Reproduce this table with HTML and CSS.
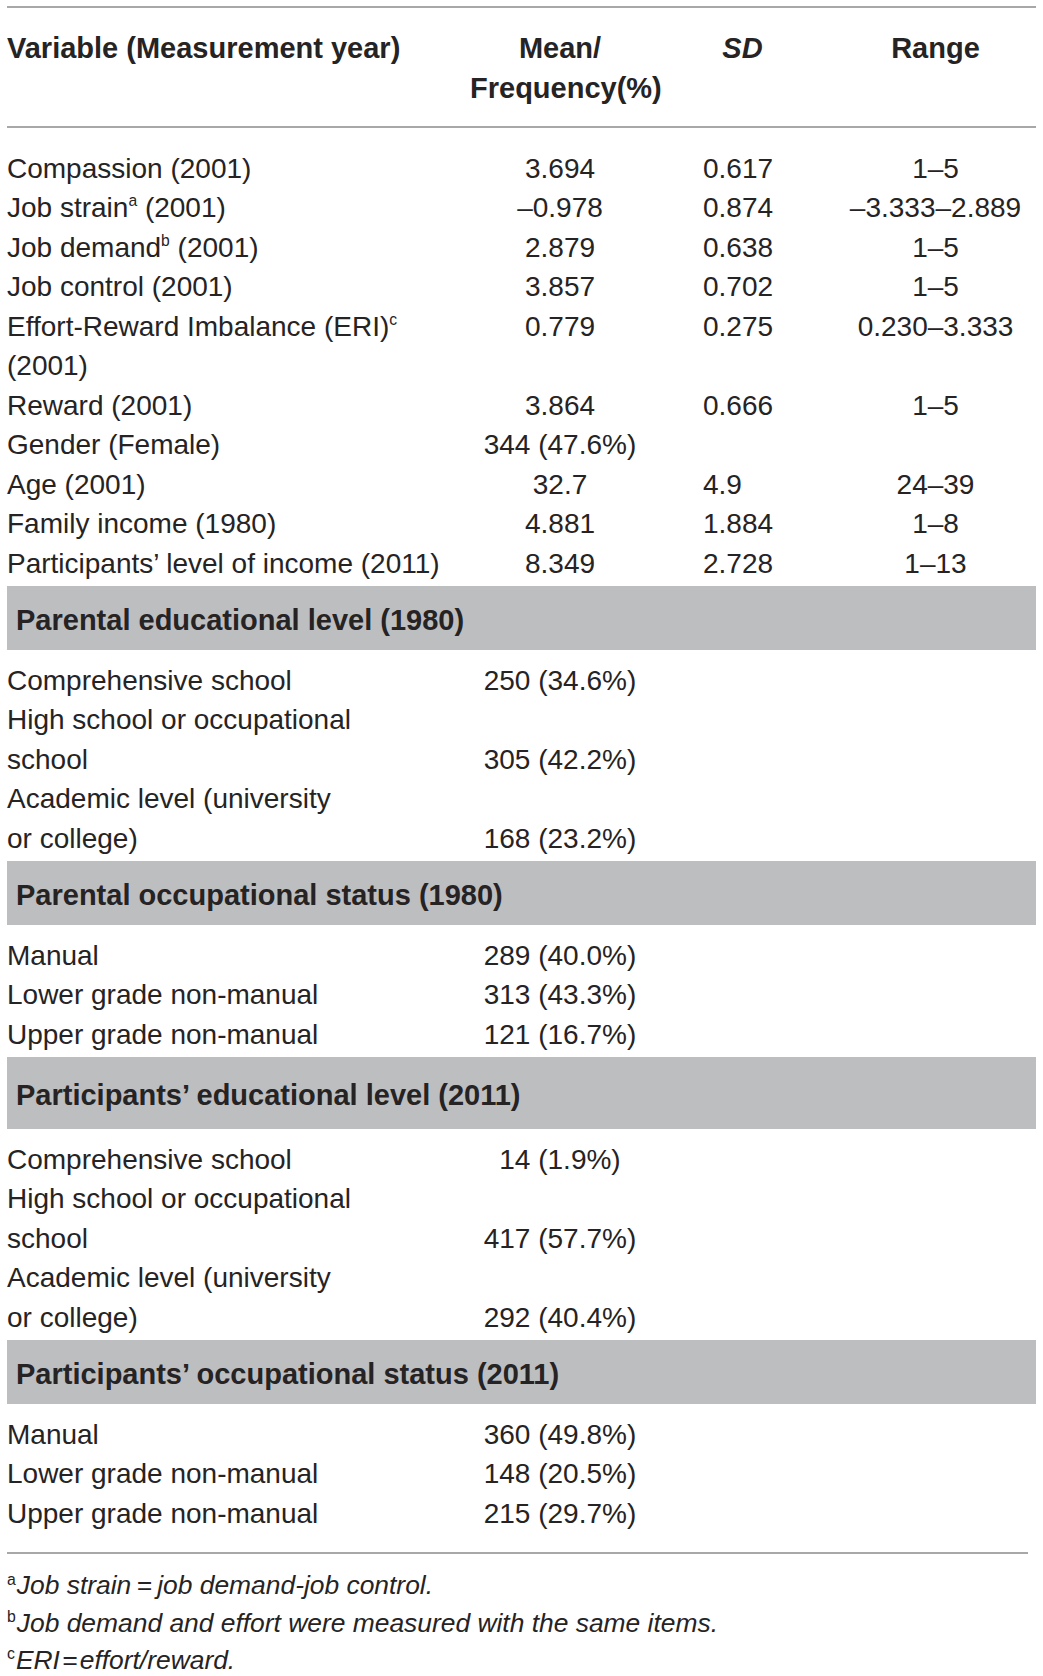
FILE: index.html
```html
<!DOCTYPE html>
<html lang="en">
<head>
<meta charset="utf-8">
<title>Descriptive statistics</title>
<link rel="stylesheet" href="styles.css">
</head>
<body>
<div class="table">
  <div class="row head">
    <div class="c-var">Variable (Measurement year)</div>
    <div class="c-mean">Mean/<br>Frequency(%)</div>
    <div class="c-sd"><i>SD</i></div>
    <div class="c-range">Range</div>
  </div>

  <div class="section first">
    <div class="row"><div class="c-var">Compassion (2001)</div><div class="c-mean">3.694</div><div class="c-sd">0.617</div><div class="c-range">1–5</div></div>
    <div class="row"><div class="c-var">Job strain<sup>a</sup> (2001)</div><div class="c-mean">–0.978</div><div class="c-sd">0.874</div><div class="c-range">–3.333–2.889</div></div>
    <div class="row"><div class="c-var">Job demand<sup>b</sup> (2001)</div><div class="c-mean">2.879</div><div class="c-sd">0.638</div><div class="c-range">1–5</div></div>
    <div class="row"><div class="c-var">Job control (2001)</div><div class="c-mean">3.857</div><div class="c-sd">0.702</div><div class="c-range">1–5</div></div>
    <div class="row top"><div class="c-var">Effort-Reward Imbalance (ERI)<sup>c</sup><br>(2001)</div><div class="c-mean">0.779</div><div class="c-sd">0.275</div><div class="c-range">0.230–3.333</div></div>
    <div class="row"><div class="c-var">Reward (2001)</div><div class="c-mean">3.864</div><div class="c-sd">0.666</div><div class="c-range">1–5</div></div>
    <div class="row"><div class="c-var">Gender (Female)</div><div class="c-mean">344 (47.6%)</div><div class="c-sd"></div><div class="c-range"></div></div>
    <div class="row"><div class="c-var">Age (2001)</div><div class="c-mean">32.7</div><div class="c-sd">4.9</div><div class="c-range">24–39</div></div>
    <div class="row"><div class="c-var">Family income (1980)</div><div class="c-mean">4.881</div><div class="c-sd">1.884</div><div class="c-range">1–8</div></div>
    <div class="row"><div class="c-var">Participants’ level of income (2011)</div><div class="c-mean">8.349</div><div class="c-sd">2.728</div><div class="c-range">1–13</div></div>
  </div>

  <div class="band">Parental educational level (1980)</div>
  <div class="section">
    <div class="row"><div class="c-var">Comprehensive school</div><div class="c-mean">250 (34.6%)</div><div class="c-sd"></div><div class="c-range"></div></div>
    <div class="row"><div class="c-var">High school or occupational<br>school</div><div class="c-mean">305 (42.2%)</div><div class="c-sd"></div><div class="c-range"></div></div>
    <div class="row"><div class="c-var">Academic level (university<br>or college)</div><div class="c-mean">168 (23.2%)</div><div class="c-sd"></div><div class="c-range"></div></div>
  </div>

  <div class="band">Parental occupational status (1980)</div>
  <div class="section">
    <div class="row"><div class="c-var">Manual</div><div class="c-mean">289 (40.0%)</div><div class="c-sd"></div><div class="c-range"></div></div>
    <div class="row"><div class="c-var">Lower grade non-manual</div><div class="c-mean">313 (43.3%)</div><div class="c-sd"></div><div class="c-range"></div></div>
    <div class="row"><div class="c-var">Upper grade non-manual</div><div class="c-mean">121 (16.7%)</div><div class="c-sd"></div><div class="c-range"></div></div>
  </div>

  <div class="band tall">Participants’ educational level (2011)</div>
  <div class="section">
    <div class="row"><div class="c-var">Comprehensive school</div><div class="c-mean">14 (1.9%)</div><div class="c-sd"></div><div class="c-range"></div></div>
    <div class="row"><div class="c-var">High school or occupational<br>school</div><div class="c-mean">417 (57.7%)</div><div class="c-sd"></div><div class="c-range"></div></div>
    <div class="row"><div class="c-var">Academic level (university<br>or college)</div><div class="c-mean">292 (40.4%)</div><div class="c-sd"></div><div class="c-range"></div></div>
  </div>

  <div class="band">Participants’ occupational status (2011)</div>
  <div class="section last">
    <div class="row"><div class="c-var">Manual</div><div class="c-mean">360 (49.8%)</div><div class="c-sd"></div><div class="c-range"></div></div>
    <div class="row"><div class="c-var">Lower grade non-manual</div><div class="c-mean">148 (20.5%)</div><div class="c-sd"></div><div class="c-range"></div></div>
    <div class="row"><div class="c-var">Upper grade non-manual</div><div class="c-mean">215 (29.7%)</div><div class="c-sd"></div><div class="c-range"></div></div>
  </div>

  <div class="notes">
    <p><sup>a</sup><i>Job strain&#8201;=&#8201;job demand-job control.</i></p>
    <p><sup>b</sup><i>Job demand and effort were measured with the same items.</i></p>
    <p><sup>c</sup><i>ERI&#8202;=&#8202;effort/reward.</i></p>
  </div>
</div>
</body>
</html>
```

FILE: styles.css
```css
body {
  margin: 0;
  background: #ffffff;
  color: #262324;
  font-family: "Liberation Sans", Arial, Helvetica, sans-serif;
}

.table {
  margin: 6px 0 0 7px;
  width: 1029px;
  border-top: 2px solid #a8a8a8;
}

.row {
  display: grid;
  grid-template-columns: 463px 180px 185px 1fr;
  align-items: end;
  font-size: 28px;
  line-height: 39.5px;
  white-space: nowrap;
}

.row.top {
  align-items: start;
}

.c-mean {
  text-align: center;
}

.c-sd {
  padding-left: 53px;
}

.c-range {
  text-align: center;
}

.row.head {
  align-items: start;
  font-size: 29px;
  font-weight: bold;
  padding: 21.2px 0 17.8px;
  border-bottom: 2px solid #a8a8a8;
}

.row.head .c-sd {
  padding-left: 0;
  text-align: center;
}

sup {
  font-size: 0.56em;
  line-height: 0;
  vertical-align: 0.7em;
}

.section {
  padding: 10.6px 0 2.9px;
}

.section.first {
  padding: 20.6px 0 2.9px;
}

.section.last {
  padding-bottom: 18.9px;
}

.band {
  background: #bdbec0;
  font-size: 29px;
  font-weight: bold;
  line-height: 39.5px;
  height: 64px;
  box-sizing: border-box;
  padding: 15.2px 0 0 9px;
  white-space: nowrap;
}

.band.tall {
  height: 72px;
  padding-top: 19.2px;
}

.notes {
  width: 1021px;
  border-top: 2px solid #a8a8a8;
  padding-top: 13.5px;
}

.notes p {
  margin: 0;
  font-size: 26.4px;
  line-height: 37.4px;
  white-space: nowrap;
}

.notes sup {
  font-size: 0.6em;
  vertical-align: 0.62em;
  margin-right: 1px;
}
```
